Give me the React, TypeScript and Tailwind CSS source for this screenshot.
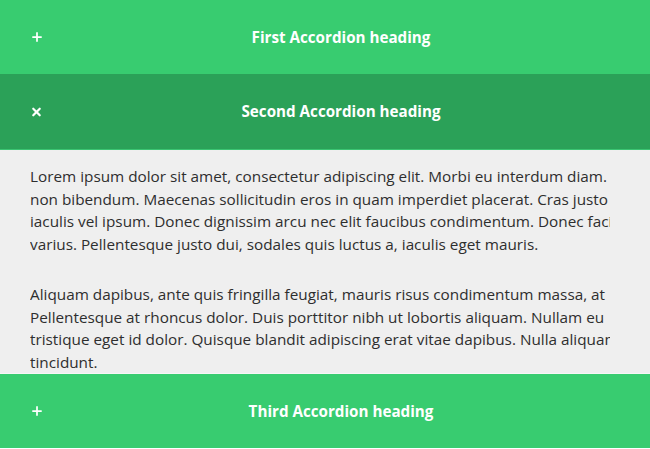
import { Plus, X } from 'lucide-react';

const para1 = [
  'Lorem ipsum dolor sit amet, consectetur adipiscing elit. Morbi eu interdum diam.',
  'non bibendum. Maecenas sollicitudin eros in quam imperdiet placerat. Cras justo',
  'iaculis vel ipsum. Donec dignissim arcu nec elit faucibus condimentum. Donec facilisis',
  'varius. Pellentesque justo dui, sodales quis luctus a, iaculis eget mauris.',
];

const para2 = [
  'Aliquam dapibus, ante quis fringilla feugiat, mauris risus condimentum massa, at',
  'Pellentesque at rhoncus dolor. Duis porttitor nibh ut lobortis aliquam. Nullam eu',
  'tristique eget id dolor. Quisque blandit adipiscing erat vitae dapibus. Nulla aliquam',
  'tincidunt.',
];

function Heading({ title, open }: { title: string; open?: boolean }) {
  return (
    <div
      className={
        open
          ? 'relative flex items-center justify-center h-[76px] pl-[62px] pr-[30px] bg-[#2ba158] border-b border-[#3bc472]'
          : 'relative flex items-center justify-center h-[74px] pl-[62px] pr-[30px] bg-[#38cc70]'
      }
    >
      <span className="absolute left-[30px] top-1/2 -translate-y-1/2 text-white">
        {open ? <X className="w-[13px] h-[13px]" strokeWidth={4} /> : <Plus className="w-[14px] h-[14px]" strokeWidth={3} />}
      </span>
      <h3 className="text-white font-bold text-[15.2px]">{title}</h3>
    </div>
  );
}

export default function App() {
  return (
    <div className="w-[650px] h-[449px] overflow-hidden bg-white font-['Open_Sans',sans-serif]">
      <Heading title="First Accordion heading" />
      <Heading title="Second Accordion heading" open />
      <div className="h-[224px] overflow-hidden bg-[#efefef] border-b border-[#f6f6f6] pl-[30px] pr-[40px] pt-[15px] text-[#2e2e2e] text-[15.3px] leading-[22.5px]">
        <div className="overflow-hidden">
          <p className="whitespace-nowrap mb-[28px]">
            {para1.map((l) => (
              <span key={l} className="block">{l}</span>
            ))}
          </p>
          <p className="whitespace-nowrap">
            {para2.map((l) => (
              <span key={l} className="block">{l}</span>
            ))}
          </p>
        </div>
      </div>
      <Heading title="Third Accordion heading" />
    </div>
  );
}
